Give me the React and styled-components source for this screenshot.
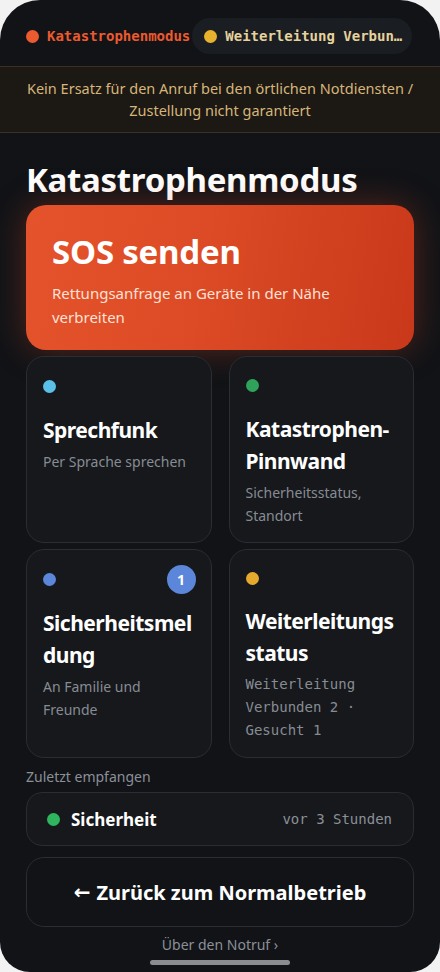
import React from "react";
import styled, { createGlobalStyle } from "styled-components";

const Global = createGlobalStyle`
  html, body {
    margin: 0;
    padding: 0;
    background: #f2f2f2;
  }
  * {
    box-sizing: border-box;
  }
`;

const tiles = [
  { dot: "#5bc0e8", title: "Sprechfunk", sub: "Per Sprache sprechen" },
  { dot: "#2fa35a", title: "Katastrophen-Pinnwand", sub: "Sicherheitsstatus, Standort" },
  { dot: "#5b86d9", title: "Sicherheitsmeldung", sub: "An Familie und Freunde", badge: 1 },
  {
    dot: "#e5a92e",
    title: "Weiterleitungsstatus",
    sub: "Weiterleitung Verbunden 2 · Gesucht 1",
    mono: true,
  },
];

//disaster mode home screen
const App = () => {
  return (
    <>
      <Global />
      <Phone>
        <StatusBar>
          <Chip>
            <Dot color="#ec5a2f" />
            <ChipText color="#ec5a2f">Katastrophenmodus</ChipText>
          </Chip>
          <Chip pill>
            <Dot color="#e8b22f" />
            <ChipText color="#e6d29c">Weiterleitung Verbun…</ChipText>
          </Chip>
        </StatusBar>
        <Warning>
          Kein Ersatz für den Anruf bei den örtlichen Notdiensten / Zustellung
          nicht garantiert
        </Warning>
        <Content>
          <Title>Katastrophenmodus</Title>
          <SosCard>
            <SosTitle>SOS senden</SosTitle>
            <SosSub>Rettungsanfrage an Geräte in der Nähe verbreiten</SosSub>
          </SosCard>
          <Grid>
            {tiles.map((t) => (
              <Tile key={t.title}>
                <TileTop>
                  <Dot color={t.dot} />
                  {t.badge && <Badge>{t.badge}</Badge>}
                </TileTop>
                <TileTitle>{t.title}</TileTitle>
                <TileSub mono={t.mono}>{t.sub}</TileSub>
              </Tile>
            ))}
          </Grid>
          <Label>Zuletzt empfangen</Label>
          <RecentRow>
            <Dot color="#2fb55e" />
            <RecentName>Sicherheit</RecentName>
            <RecentTime>vor 3 Stunden</RecentTime>
          </RecentRow>
          <BackButton>
            <Arrow>←</Arrow> Zurück zum Normalbetrieb
          </BackButton>
          <Footer>Über den Notruf ›</Footer>
          <HomeBar />
        </Content>
      </Phone>
    </>
  );
};

const Phone = styled.div`
  width: 440px;
  height: 972px;
  background: #111317;
  border-radius: 40px 40px 30px 30px;
  overflow: hidden;
  font-family: "Noto Sans", "Open Sans", sans-serif;
  color: #fff;
  display: flex;
  flex-direction: column;
`;
const StatusBar = styled.div`
  display: flex;
  align-items: flex-start;
  gap: 2px;
  padding: 18px 0 0 26px;
  height: 66px;
`;
const Chip = styled.div`
  display: flex;
  align-items: center;
  gap: 8px;
  height: 36px;
  padding: ${(p) => (p.pill ? "0 10px 0 12px" : "0")};
  background: ${(p) => (p.pill ? "#1a1d22" : "transparent")};
  border-radius: 18px;
  flex: none;
`;
const Dot = styled.span`
  width: 13px;
  height: 13px;
  border-radius: 50%;
  background: ${(p) => p.color};
  flex: none;
`;
const ChipText = styled.span`
  font-family: "DejaVu Sans Mono", "Liberation Mono", monospace;
  font-weight: bold;
  font-size: 14px;
  color: ${(p) => p.color};
  white-space: nowrap;
`;
const Warning = styled.div`
  background: #1c1914;
  border-top: 1px solid #3d3020;
  border-bottom: 1px solid #3d3020;
  color: #d6b57a;
  font-size: 14.5px;
  line-height: 22px;
  text-align: center;
  padding: 10px 20px 11px;
`;
const Content = styled.div`
  padding: 0 26px;
  display: flex;
  flex-direction: column;
  flex: 1;
`;
const Title = styled.h1`
  margin: 24px 0 0;
  font-size: 33px;
  line-height: 46px;
  font-weight: 700;
  letter-spacing: -0.3px;
`;
const SosCard = styled.div`
  margin-top: 2px;
  height: 145px;
  border-radius: 20px;
  padding: 24px 26px;
  background: linear-gradient(100deg, #e4532b 0%, #dc4b25 45%, #c9381a 100%);
  box-shadow: 0 0 34px rgba(214, 74, 34, 0.35);
`;
const SosTitle = styled.div`
  font-size: 33px;
  font-weight: 700;
  line-height: 46px;
  letter-spacing: -0.2px;
`;
const SosSub = styled.div`
  margin-top: 6px;
  font-size: 15px;
  line-height: 24px;
  color: #fde1d6;
`;
const Grid = styled.div`
  margin-top: 6px;
  display: grid;
  grid-template-columns: 1fr 1fr;
  column-gap: 17px;
  row-gap: 6px;
  grid-template-rows: 187px 209px;
`;
const Tile = styled.div`
  border: 1px solid #2a2d33;
  background: #16181c;
  border-radius: 18px;
  padding: 15px 15px 15px 16px;
  display: flex;
  flex-direction: column;
  min-width: 0;
`;
const TileTop = styled.div`
  display: flex;
  justify-content: space-between;
  align-items: center;
  height: 28px;
`;
const Badge = styled.span`
  width: 29px;
  height: 29px;
  border-radius: 50%;
  background: #5b86d9;
  color: #fff;
  font-size: 14px;
  font-weight: 700;
  display: flex;
  align-items: center;
  justify-content: center;
`;
const TileTitle = styled.div`
  margin-top: 14px;
  font-size: 21px;
  font-weight: 700;
  line-height: 32px;
  overflow-wrap: anywhere;
  letter-spacing: -0.5px;
`;
const TileSub = styled.div`
  margin-top: 4px;
  font-family: ${(p) =>
    p.mono ? '"DejaVu Sans Mono", "Liberation Mono", monospace' : "inherit"};
  font-size: 14px;
  line-height: 23px;
  color: #878c93;
`;
const Label = styled.div`
  margin-top: 9px;
  font-size: 14px;
  color: #8b9097;
`;
const RecentRow = styled.div`
  margin-top: 6px;
  height: 54px;
  border: 1px solid #2a2d33;
  background: #16181c;
  border-radius: 16px;
  display: flex;
  align-items: center;
  padding: 0 21px 0 20px;
  gap: 11px;
`;
const RecentName = styled.span`
  font-size: 17px;
  font-weight: 700;
  flex: 1;
`;
const RecentTime = styled.span`
  font-family: "DejaVu Sans Mono", "Liberation Mono", monospace;
  font-size: 14px;
  color: #8b9097;
`;
const BackButton = styled.div`
  margin-top: 11px;
  height: 70px;
  border: 1px solid #2a2d33;
  border-radius: 18px;
  display: flex;
  align-items: center;
  justify-content: center;
  gap: 6px;
  font-size: 20px;
  font-weight: 700;
`;
const Arrow = styled.span`
  font-family: "DejaVu Sans", sans-serif;
  font-size: 20px;
  font-weight: 700;
`;
const Footer = styled.div`
  margin-top: 8px;
  text-align: center;
  font-size: 14px;
  color: #8b9097;
`;
const HomeBar = styled.div`
  margin: 6px auto 0;
  width: 140px;
  height: 5px;
  border-radius: 3px;
  background: #8a8c90;
`;

export default App;
